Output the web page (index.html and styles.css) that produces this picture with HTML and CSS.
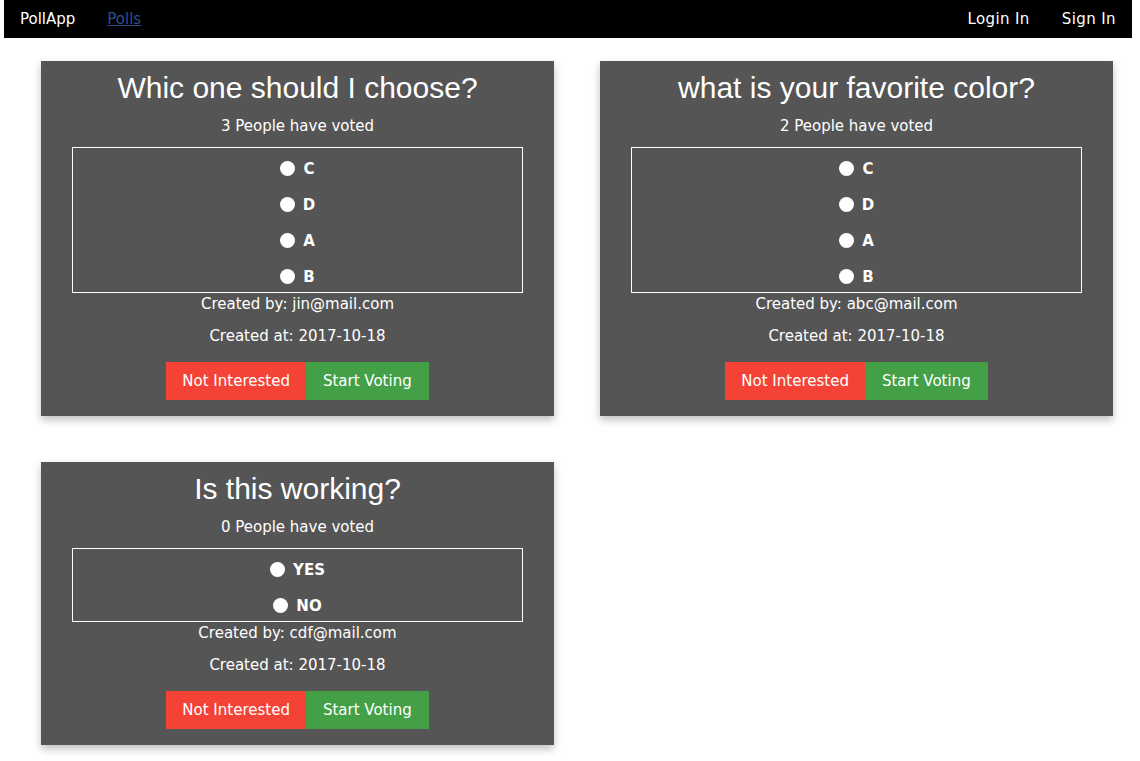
FILE: index.html
```html
<!DOCTYPE html>
<html>
<head>
<meta charset="utf-8">
<title>PollApp</title>
<link rel="stylesheet" href="styles.css">
</head>
<body>
<nav class="navbar">
  <div class="nav-left">
    <span class="nav-item brand">PollApp</span>
    <a class="nav-item nav-link" href="#">Polls</a>
  </div>
  <div class="nav-right">
    <span class="nav-item">Login In</span>
    <span class="nav-item">Sign In</span>
  </div>
</nav>
<main class="polls">
  <section class="card">
    <h2 class="card-title">Whic one should I choose?</h2>
    <p class="votes">3 People have voted</p>
    <div class="options">
      <label class="option"><span class="radio"></span><span class="opt-label">C</span></label>
      <label class="option"><span class="radio"></span><span class="opt-label">D</span></label>
      <label class="option"><span class="radio"></span><span class="opt-label">A</span></label>
      <label class="option"><span class="radio"></span><span class="opt-label">B</span></label>
    </div>
    <p class="meta by">Created by: jin@mail.com</p>
    <p class="meta at">Created at: 2017-10-18</p>
    <div class="actions">
      <button class="btn btn-red">Not Interested</button><button class="btn btn-green">Start Voting</button>
    </div>
  </section>
  <section class="card">
    <h2 class="card-title">what is your favorite color?</h2>
    <p class="votes">2 People have voted</p>
    <div class="options">
      <label class="option"><span class="radio"></span><span class="opt-label">C</span></label>
      <label class="option"><span class="radio"></span><span class="opt-label">D</span></label>
      <label class="option"><span class="radio"></span><span class="opt-label">A</span></label>
      <label class="option"><span class="radio"></span><span class="opt-label">B</span></label>
    </div>
    <p class="meta by">Created by: abc@mail.com</p>
    <p class="meta at">Created at: 2017-10-18</p>
    <div class="actions">
      <button class="btn btn-red">Not Interested</button><button class="btn btn-green">Start Voting</button>
    </div>
  </section>
  <section class="card">
    <h2 class="card-title">Is this working?</h2>
    <p class="votes">0 People have voted</p>
    <div class="options">
      <label class="option"><span class="radio"></span><span class="opt-label">YES</span></label>
      <label class="option"><span class="radio"></span><span class="opt-label">NO</span></label>
    </div>
    <p class="meta by">Created by: cdf@mail.com</p>
    <p class="meta at">Created at: 2017-10-18</p>
    <div class="actions">
      <button class="btn btn-red">Not Interested</button><button class="btn btn-green">Start Voting</button>
    </div>
  </section>
</main>
</body>
</html>
```
FILE: styles.css
```css
html, body {
  margin: 0;
  padding: 0;
  background: #fff;
}
body {
  font-family: "DejaVu Sans", Verdana, sans-serif;
}
.navbar {
  margin: 0 8px 0 4px;
  height: 38px;
  background: #000;
  display: flex;
  justify-content: space-between;
  align-items: center;
}
.nav-left, .nav-right {
  display: flex;
  align-items: center;
}
.nav-item {
  padding: 0 16px;
  color: #fff;
  font-size: 15px;
}
.nav-right .nav-item {
  letter-spacing: 0.4px;
}
.nav-link {
  color: #2b4f8f;
  text-decoration: underline;
}
.polls {
  display: grid;
  grid-template-columns: 513px 513px;
  column-gap: 46px;
  row-gap: 46px;
  padding: 23px 0 20px 41px;
  align-items: start;
}
.card {
  background: #555;
  color: #fff;
  text-align: center;
  padding: 10px 31px 16px;
  box-shadow: 0 4px 8px rgba(0,0,0,0.25);
}
.card-title {
  margin: 0;
  font-family: "Liberation Sans", Arial, sans-serif;
  font-weight: normal;
  font-size: 30px;
  line-height: 34px;
}
.votes {
  margin: 12px 0 0;
  font-size: 15px;
  line-height: 18px;
}
.options {
  margin-top: 12px;
  border: 1px solid #fff;
}
.option {
  display: flex;
  justify-content: center;
  align-items: center;
  gap: 8px;
  height: 36px;
  box-sizing: border-box;
  padding-top: 5px;
}
.radio {
  width: 15px;
  height: 15px;
  border-radius: 50%;
  background: #fff;
  display: inline-block;
}
.opt-label {
  font-weight: bold;
  font-size: 15px;
}
.meta {
  font-size: 15px;
  line-height: 18px;
  margin: 0;
}
.meta.by { margin-top: 2px; }
.meta.at { margin-top: 14px; }
.actions {
  margin-top: 17px;
  display: flex;
  justify-content: center;
}
.btn {
  border: none;
  height: 38px;
  padding: 0 16px;
  color: #fff;
  font-family: "DejaVu Sans", Verdana, sans-serif;
  font-size: 15px;
  cursor: pointer;
}
.btn-green { padding: 0 17px; }
.btn-red { background: #f44336; }
.btn-green { background: #43a047; }
```
